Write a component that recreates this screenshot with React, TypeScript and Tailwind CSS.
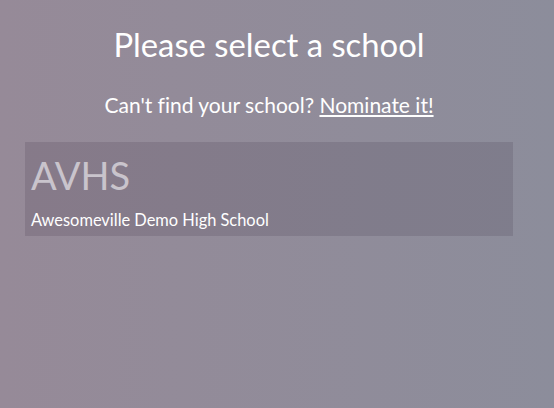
export default function App() {
  return (
    <div
      className="h-[408px] w-[554px] overflow-hidden bg-gradient-to-r from-[#968a98] to-[#8c8d9b] text-white [font-variant-ligatures:none]"
      style={{ fontFamily: 'Lato, "Noto Sans", sans-serif' }}
    >
      <div className="ml-[25px] w-[488px] pt-[26px]">
        <h1 className="text-center text-[32.8px] leading-[38px] font-normal">Please select a school</h1>
        <p className="mt-[28px] text-center text-[21px] leading-[26px]">
          Can't find your school?{' '}
          <a href="#" className="underline underline-offset-2">
            Nominate it!
          </a>
        </p>
        <div className="mt-[24px] h-[94px] bg-[rgba(40,30,50,0.14)] px-[6px] pt-[10px]">
          <div className="text-[38px] leading-[46px] font-normal text-[#c9c4cc]">AVHS</div>
          <div className="mt-[12px] text-[16.4px] leading-[20px]">Awesomeville Demo High School</div>
        </div>
      </div>
    </div>
  );
}
